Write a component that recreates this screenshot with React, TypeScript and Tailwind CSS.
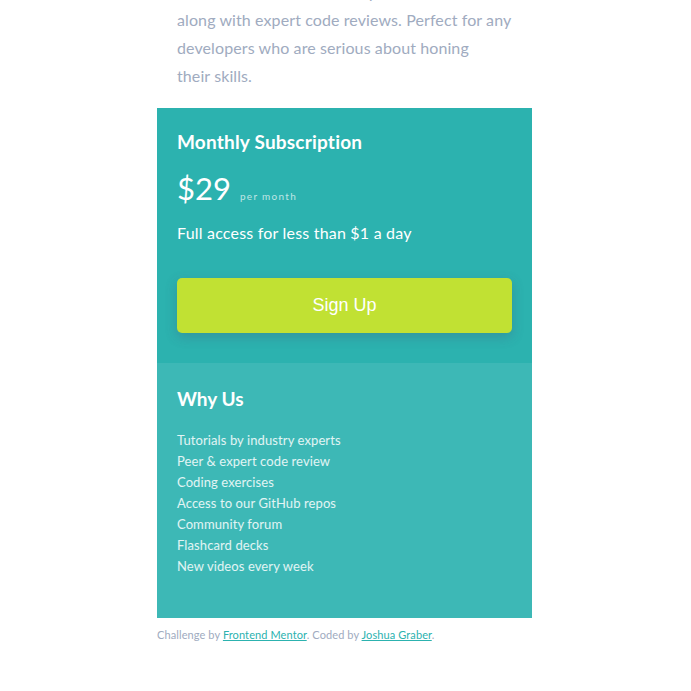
export default function App() {
  const perks = [
    "Tutorials by industry experts",
    "Peer & expert code review",
    "Coding exercises",
    "Access to our GitHub repos",
    "Community forum",
    "Flashcard decks",
    "New videos every week",
  ];

  return (
    <div className="min-h-[691px] bg-white font-['Lato',sans-serif] overflow-hidden pr-[2px]">
      <main className="mx-auto w-[375px] mt-[-22px]">
        <section className="bg-white px-5 pb-[18px]">
          <p className="whitespace-nowrap text-[16px] leading-[28px] tracking-[0.1px] text-[#a0abc0]">
            Get access to our full library of tutorials
            <br />
            along with expert code reviews. Perfect for any
            <br />
            developers who are serious about honing
            <br />
            their skills.
          </p>
        </section>

        <section className="bg-[#2cb2af] px-5 pt-[22px] pb-[30px] text-white">
          <h2 className="text-[19px] font-bold leading-[24px] tracking-[0.2px]">
            Monthly Subscription
          </h2>
          <div className="mt-[15px] flex items-baseline gap-[9px]">
            <span className="text-[31px] leading-[38px]">$29</span>
            <span className="text-[10px] tracking-[1.3px] text-white/70">
              per month
            </span>
          </div>
          <p className="mt-[14px] text-[16px] leading-[24px] tracking-[0.2px]">
            Full access for less than $1 a day
          </p>
          <button className="mt-[33px] h-[55px] w-full rounded-[5px] bg-[#c1e133] font-['Liberation_Sans',sans-serif] text-[18px] text-white shadow-[0_4px_12px_rgba(70,80,120,0.3)]">
            Sign Up
          </button>
        </section>

        <section className="bg-[#3db8b6] px-5 pt-[24px] pb-[41px] text-white">
          <h2 className="text-[19px] font-bold leading-[24px]">Why Us</h2>
          <ul className="mt-[19px] flex flex-col text-[13px] leading-[21px] tracking-[0.1px] text-white/85">
            {perks.map((p) => (
              <li key={p}>{p}</li>
            ))}
          </ul>
        </section>

        <footer className="pt-[9px] text-[11px] leading-[16px] tracking-[0.1px] text-[#a0abc0]">
          Challenge by{" "}
          <a href="#" className="text-[#2cb2af] underline">
            Frontend Mentor
          </a>
          . Coded by{" "}
          <a href="#" className="text-[#2cb2af] underline">
            Joshua Graber
          </a>
          .
        </footer>
      </main>
    </div>
  );
}
